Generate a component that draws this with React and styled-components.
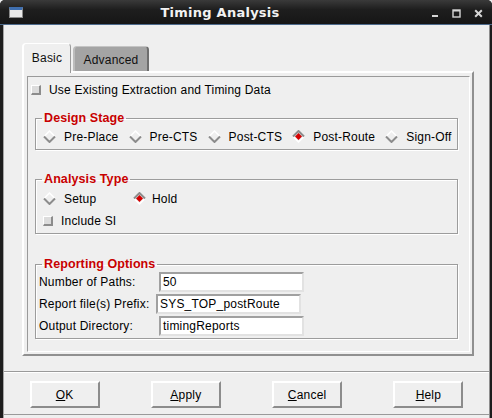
import React from 'react';
import styled, { createGlobalStyle } from 'styled-components';

const Global = createGlobalStyle`
  html, body { margin: 0; padding: 0; background: #efefef; }
  body {
    font-family: 'Liberation Sans', Arial, sans-serif;
    font-size: 12px;
    letter-spacing: 0.2px;
    color: #000;
  }
`;

const Window = styled.div`
  width: 492px;
  height: 418px;
  display: flex;
  flex-direction: column;
  background: #1d1d1d;
  border-radius: 5px 5px 0 0;
  overflow: hidden;
  box-sizing: border-box;
`;

const TitleBar = styled.div`
  height: 24px;
  display: flex;
  align-items: center;
  background: linear-gradient(#3a3a3a, #1e1e1e 40%, #161616);
  border-bottom: 1px solid #4d6a8c;
  flex-shrink: 0;
`;

const AppIcon = styled.div`
  margin-left: 9px;
  width: 12px;
  height: 7px;
  border: 1px solid #8a8a8a;
  border-top: 3px solid #3f6fb0;
  background: #e8e8e8;
`;

const Title = styled.div`
  flex: 1;
  text-align: center;
  font-family: 'DejaVu Sans', sans-serif;
  font-weight: bold;
  font-size: 13px;
  letter-spacing: 0.25px;
  color: #f2f2f2;
  margin-left: -14px;
  padding-top: 1px;
`;

const Controls = styled.div`
  display: flex;
  align-items: center;
  gap: 13px;
  margin-right: 9px;
  padding-top: 2px;
`;

const Body = styled.div`
  flex: 1;
  display: flex;
  flex-direction: column;
  background: #efefef;
  margin-left: 3px;
  margin-right: 2px;
  border-left: 1px solid #a4a4a4;
  border-right: 1px solid #8e8e8e;
`;

const MainArea = styled.div`
  height: 347px;
  box-sizing: border-box;
  padding: 18px 0 0 18px;
  border-bottom: 1px solid #9a9a9a;
  box-shadow: 0 1px 0 #ffffff;
`;

const TabRow = styled.div`
  display: flex;
  align-items: flex-end;
  gap: 2px;
  height: 28px;
`;

const Tab = styled.div`
  box-sizing: border-box;
  width: ${p => p.$w}px;
  height: ${p => (p.$active ? 30 : 25)}px;
  margin-bottom: ${p => (p.$active ? -2 : 0)}px;
  display: flex;
  align-items: ${p => (p.$active ? 'flex-start' : 'center')};
  justify-content: center;
  padding-top: ${p => (p.$active ? 7 : 1)}px;
  font-size: 12px;
  position: relative;
  z-index: ${p => (p.$active ? 2 : 0)};
  background: ${p => (p.$active ? '#efefef' : '#a4a4a4')};
  border-top: 1px solid ${p => (p.$active ? '#ffffff' : '#c4c4c4')};
  border-left: 2px solid ${p => (p.$active ? '#ffffff' : '#bcbcbc')};
  border-right: ${p => (p.$active ? '1px solid #9a9a9a' : '2px solid #6e6e6e')};
  border-radius: 4px 4px 0 0;
  color: #111;
`;

const Panel = styled.div`
  width: 452px;
  height: 285px;
  box-sizing: border-box;
  border-top: 2px solid #ffffff;
  border-left: 2px solid #ffffff;
  border-right: 2px solid #909090;
  border-bottom: 2px solid #909090;
  padding: 3px 2px 2px 3px;
`;

const PanelInner = styled.div`
  height: 100%;
  box-sizing: border-box;
  border-top: 1px solid #9a9a9a;
  border-left: 1px solid #9a9a9a;
  border-right: 1px solid #ffffff;
  border-bottom: 1px solid #ffffff;
  padding: 5px 11px 0 3px;
  display: flex;
  flex-direction: column;
`;

const CheckRow = styled.label`
  display: flex;
  align-items: center;
  height: 16px;
  gap: 8px;
  white-space: nowrap;
  margin-top: ${p => p.$top || 0}px;
`;

const Box = styled.span`
  width: 10px;
  height: 10px;
  box-sizing: border-box;
  background: #dcdcdc;
  border-top: 1px solid #ffffff;
  border-left: 1px solid #ffffff;
  border-right: 2px solid #8c8c8c;
  border-bottom: 2px solid #8c8c8c;
  flex-shrink: 0;
`;

const Group = styled.fieldset`
  margin: ${p => p.$top}px 0 0 4px;
  padding: ${p => p.$pad};
  border: 1px solid #9c9c9c;
  box-shadow: 1px 1px 0 #ffffff, inset 1px 1px 0 #ffffff;
  min-width: 0;
`;

const Legend = styled.legend`
  color: #c80000;
  font-weight: bold;
  font-size: 12.5px;
  line-height: 14px;
  letter-spacing: 0.1px;
  padding: 0 2px;
  margin-left: ${p => p.$off}px;
`;

const RadioRow = styled.div`
  display: flex;
  align-items: center;
  height: 15px;
  gap: 10px;
  white-space: nowrap;
`;

const RadioItem = styled.label`
  display: flex;
  align-items: center;
  flex-shrink: 0;
  gap: ${p => p.$gap || 8}px;
  width: ${p => (p.$w ? `${p.$w}px` : 'auto')};
`;

const FormGrid = styled.div`
  display: flex;
  flex-direction: column;
  gap: 2px;
`;

const FormRow = styled.div`
  display: flex;
  align-items: center;
  height: 20px;
  white-space: nowrap;
`;

const FieldLabel = styled.span`
  width: 117px;
  flex-shrink: 0;
`;

const Entry = styled.div`
  width: 145px;
  height: 20px;
  box-sizing: border-box;
  margin-left: ${p => p.$shift || 0}px;
  background: #ffffff;
  border-top: 2px solid #a0a0a0;
  border-left: 2px solid #a0a0a0;
  border-right: 2px solid #e2e2e2;
  border-bottom: 2px solid #e2e2e2;
  padding: 0 2px;
  line-height: 16px;
  font-size: 12px;
`;

const ButtonBar = styled.div`
  flex: 1;
  display: flex;
  justify-content: space-around;
  align-items: flex-start;
  padding-top: 8px;
  margin-top: 1px;
  margin-bottom: 3px;
  border-bottom: 1px solid #9a9a9a;
`;

const Btn = styled.button`
  width: 70px;
  height: 27px;
  box-sizing: border-box;
  background: #efefef;
  border-top: 2px solid #ffffff;
  border-left: 2px solid #ffffff;
  border-right: 2px solid #8c8c8c;
  border-bottom: 2px solid #8c8c8c;
  font-family: 'Liberation Sans', Arial, sans-serif;
  font-size: 12px;
  letter-spacing: 0.2px;
  color: #000;
  padding: 0;
  u { text-decoration: underline; text-underline-offset: 1px; }
`;

function Diamond({ on }) {
  if (on) {
    return (
      <svg width="13" height="13" viewBox="0 0 13 13">
        <polygon points="6.5,0.5 12.5,6.5 6.5,12.5 0.5,6.5" fill="#efefef" />
        <polyline points="1,6.5 6.5,12 12,6.5" fill="none" stroke="#ffffff" strokeWidth="1.5" />
        <polyline points="1,6.5 6.5,1 12,6.5" fill="none" stroke="#8c8c8c" strokeWidth="2" />
        <polygon points="6.5,3 10,6.5 6.5,10 3,6.5" fill="#d40000" />
      </svg>
    );
  }
  return (
    <svg width="13" height="13" viewBox="0 0 13 13">
      <polygon points="6.5,0.5 12.5,6.5 6.5,12.5 0.5,6.5" fill="#efefef" />
      <polyline points="1,6.5 6.5,1 12,6.5" fill="none" stroke="#ffffff" strokeWidth="1.5" />
      <polyline points="1,6.5 6.5,12 12,6.5" fill="none" stroke="#8c8c8c" strokeWidth="2" />
    </svg>
  );
}

const stages = ['Pre-Place', 'Pre-CTS', 'Post-CTS', 'Post-Route', 'Sign-Off'];

const fields = [
  { label: 'Number of Paths:', value: '50', shift: 3 },
  { label: 'Report file(s) Prefix:', value: 'SYS_TOP_postRoute', shift: 0 },
  { label: 'Output Directory:', value: 'timingReports', shift: 3 },
];

export default function App() {
  return (
    <>
      <Global />
      <Window>
        <TitleBar>
          <AppIcon />
          <Title>Timing Analysis</Title>
          <Controls>
            <svg width="8" height="10" viewBox="0 0 8 10">
              <rect x="1" y="7" width="6" height="2" fill="#d6d6d6" />
            </svg>
            <svg width="9" height="9" viewBox="0 0 9 9">
              <rect x="1" y="1" width="7" height="7" fill="none" stroke="#d6d6d6" strokeWidth="1.4" />
              <rect x="1" y="1" width="7" height="1.5" fill="#d6d6d6" />
            </svg>
            <svg width="9" height="9" viewBox="0 0 9 9">
              <path d="M1.2 1.2 L7.8 7.8 M7.8 1.2 L1.2 7.8" stroke="#d6d6d6" strokeWidth="2" />
            </svg>
          </Controls>
        </TitleBar>
        <Body>
          <MainArea>
            <TabRow>
              <Tab $w={49} $active>Basic</Tab>
              <Tab $w={76}>Advanced</Tab>
            </TabRow>
            <Panel>
              <PanelInner>
                <CheckRow>
                  <Box />
                  <span>Use Existing Extraction and Timing Data</span>
                </CheckRow>

                <Group $top={13} $pad="4px 0 5px 7px">
                  <Legend $off={-1}>Design Stage</Legend>
                  <RadioRow>
                    {stages.map(s => (
                      <RadioItem key={s}>
                        <Diamond on={s === 'Post-Route'} />
                        <span>{s}</span>
                      </RadioItem>
                    ))}
                  </RadioRow>
                </Group>

                <Group $top={22} $pad="5px 4px 4px 7px">
                  <Legend $off={-1}>Analysis Type</Legend>
                  <RadioRow>
                    <RadioItem $w={80}>
                      <Diamond />
                      <span>Setup</span>
                    </RadioItem>
                    <RadioItem $gap={6}>
                      <Diamond on />
                      <span>Hold</span>
                    </RadioItem>
                  </RadioRow>
                  <CheckRow $top={7}>
                    <Box />
                    <span>Include SI</span>
                  </CheckRow>
                </Group>

                <Group $top={23} $pad="1px 4px 2px 3px">
                  <Legend $off={3}>Reporting Options</Legend>
                  <FormGrid>
                    {fields.map(f => (
                      <FormRow key={f.label}>
                        <FieldLabel>{f.label}</FieldLabel>
                        <Entry $shift={f.shift}>{f.value}</Entry>
                      </FormRow>
                    ))}
                  </FormGrid>
                </Group>
              </PanelInner>
            </Panel>
          </MainArea>
          <ButtonBar>
            <Btn><u>O</u>K</Btn>
            <Btn><u>A</u>pply</Btn>
            <Btn><u>C</u>ancel</Btn>
            <Btn><u>H</u>elp</Btn>
          </ButtonBar>
        </Body>
      </Window>
    </>
  );
}
